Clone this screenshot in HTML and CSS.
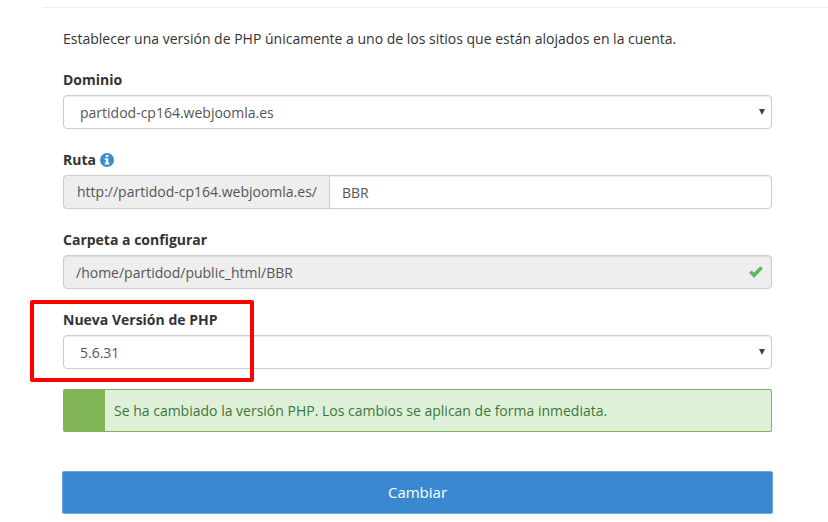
FILE: index.html
```html
<!DOCTYPE html>
<html lang="es">
<head>
    <meta charset="UTF-8">
    <meta name="viewport" content="width=device-width, initial-scale=1.0">
    <title>Versión de PHP</title>
    <link rel="stylesheet" href="styles.css">
</head>
<body>
    <main class="panel">
        <form class="formulario">
            <p class="intro">Establecer una versión de PHP únicamente a uno de los sitios que están alojados en la cuenta.</p>

            <div class="grupo">
                <label for="dominio">Dominio</label>
                <div class="selector">
                    <select id="dominio" class="control">
                        <option>partidod-cp164.webjoomla.es</option>
                    </select>
                    <svg class="flecha" viewBox="0 0 6 6"><path d="M0 0h6L3 6z"/></svg>
                </div>
            </div>

            <div class="grupo">
                <label for="ruta">Ruta
                    <svg class="info" viewBox="0 0 14 14">
                        <circle cx="7" cy="7" r="7" fill="#428bca"/>
                        <path d="M5.800 2h2.500v2.100H5.800zM4.800 5.200h3.500v4.500h1v1.700H4.800V9.700h1V6.900h-1z" fill="#fff"/>
                    </svg>
                </label>
                <div class="combinado">
                    <span class="prefijo">http://partidod-cp164.webjoomla.es/</span>
                    <input type="text" id="ruta" class="control" value="BBR">
                </div>
            </div>

            <div class="grupo">
                <label for="carpeta">Carpeta a configurar</label>
                <div class="selector">
                    <input type="text" id="carpeta" class="control" value="/home/partidod/public_html/BBR" readonly>
                    <svg class="correcto" viewBox="0 0 14 12"><path d="M0 6.800L2.600 4.500 5 6.700 11.300 0.300 14 2.600 5 12z"/></svg>
                </div>
            </div>

            <div class="grupo destacado">
                <label for="version">Nueva Versión de PHP</label>
                <div class="selector">
                    <select id="version" class="control">
                        <option>5.6.31</option>
                    </select>
                    <svg class="flecha" viewBox="0 0 6 6"><path d="M0 0h6L3 6z"/></svg>
                </div>
            </div>

            <div class="alerta" role="status">Se ha cambiado la versión PHP. Los cambios se aplican de forma inmediata.</div>

            <button type="button" class="boton">Cambiar</button>
        </form>
    </main>
</body>
</html>
```

FILE: styles.css
```css
* {
    box-sizing: border-box;
}
body {
    margin: 0;
    background-color: #fff;
    color: #333;
    font-family: "Open Sans", "Noto Sans", sans-serif;
    font-size: 14px;
    line-height: 20px;
}
.panel {
    margin: 7px 0 0 43px;
    border-top: 1px solid #eee;
}
.formulario {
    padding: 21px 56px 8px 20px;
}
.intro {
    margin: 0 0 21px;
}
.grupo {
    margin-bottom: 21px;
}
.grupo label {
    display: flex;
    align-items: center;
    gap: 4px;
    margin-bottom: 5px;
    font-weight: bold;
}
.info {
    width: 14px;
    height: 14px;
}
.control {
    display: block;
    width: 100%;
    height: 34px;
    margin: 0;
    padding: 0 12px;
    border: 1px solid #ccc;
    border-radius: 4px;
    background-color: #fff;
    box-shadow: inset 0 1px 1px rgba(0, 0, 0, 0.075);
    color: #555;
    font: inherit;
}
.control:focus {
    outline: none;
    border-color: #3a89d0;
}
select.control {
    appearance: none;
    padding: 2px 16px 0;
}
.control[readonly] {
    background-color: #eee;
}

/* iconos sobre los campos */
.selector {
    position: relative;
}
.flecha {
    position: absolute;
    top: 14px;
    right: 7px;
    width: 6px;
    height: 6px;
    fill: #444;
    pointer-events: none;
}
.correcto {
    position: absolute;
    top: 11px;
    right: 9px;
    width: 14px;
    height: 12px;
    fill: #5cb85c;
}

.combinado {
    display: flex;
}
.prefijo {
    padding: 6px 12px 6px 13px;
    border: 1px solid #ccc;
    border-right: 0;
    border-radius: 4px 0 0 4px;
    background-color: #eee;
    color: #555;
}
.combinado .control {
    flex: 1;
    min-width: 0;
    border-radius: 0 4px 4px 0;
}

/* recuadro rojo */
.destacado {
    position: relative;
    margin-bottom: 20px;
}
.destacado::after {
    content: "";
    box-sizing: border-box;
    position: absolute;
    top: -10px;
    left: -33px;
    width: 224px;
    height: 82px;
    border: 4px solid #f00;
    border-radius: 2px;
    pointer-events: none;
}

.alerta {
    margin-bottom: 40px;
    padding: 11px 9px 10px;
    border: 1px solid #82b556;
    border-left-width: 42px;
    border-radius: 2px;
    background-color: #dff0d8;
    color: #3c763d;
}
.boton {
    display: block;
    width: 100%;
    padding: 10px;
    border: 0;
    border-radius: 1px;
    background-color: #3a89d0;
    box-shadow: 0 0 0 1px #6fa6e4;
    color: #fff;
    font: inherit;
    font-size: 15px;
    font-weight: 500;
    line-height: 21px;
    cursor: pointer;
}
.boton:hover {
    background-color: #2f78ba;
}
```
